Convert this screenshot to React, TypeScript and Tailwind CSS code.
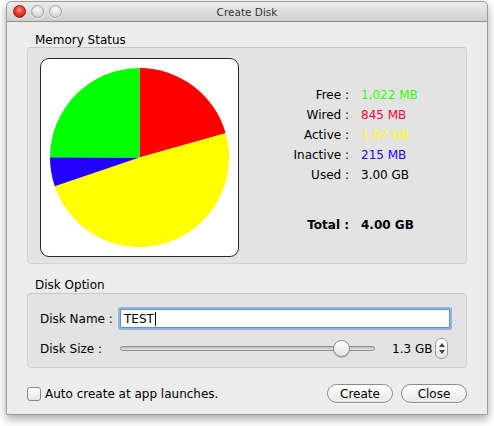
import React from "react";

const slices = [
  { mb: 845, color: "#ff0000" },
  { mb: 2014, color: "#ffff00" },
  { mb: 215, color: "#2200ff" },
  { mb: 1022, color: "#00ff00" },
];

function Pie() {
  const cx = 98.5;
  const cy = 98.5;
  const r = 89.5;
  const total = slices.reduce((s, x) => s + x.mb, 0);
  let a = 0;
  const pt = (deg: number) => {
    const rad = (deg * Math.PI) / 180;
    return [cx + r * Math.sin(rad), cy - r * Math.cos(rad)];
  };
  return (
    <svg width="197" height="197" viewBox="0 0 197 197">
      {slices.map((s, i) => {
        const start = a;
        const sweep = (s.mb / total) * 360;
        a += sweep;
        const [x1, y1] = pt(start);
        const [x2, y2] = pt(start + sweep);
        const large = sweep > 180 ? 1 : 0;
        return (
          <path
            key={i}
            d={`M${cx} ${cy} L${x1} ${y1} A${r} ${r} 0 ${large} 1 ${x2} ${y2} Z`}
            fill={s.color}
          />
        );
      })}
    </svg>
  );
}

function Light({ red }: { red?: boolean }) {
  return red ? (
    <div className="w-[13px] h-[13px] rounded-full border border-[#9b1a14] bg-[radial-gradient(circle_at_50%_35%,#ff9c8f_0%,#f0392b_45%,#b3130a_100%)] shadow-[0_1px_0_rgba(255,255,255,0.6)]" />
  ) : (
    <div className="w-[13px] h-[13px] rounded-full border border-[#a5a5a5] bg-[radial-gradient(circle_at_50%_35%,#fbfbfb_0%,#dedede_55%,#c4c4c4_100%)] shadow-[0_1px_0_rgba(255,255,255,0.6)]" />
  );
}

const rows = [
  { label: "Free :", value: "1,022 MB", color: "text-[#33ff00]" },
  { label: "Wired :", value: "845 MB", color: "text-[#ff0033]" },
  { label: "Active :", value: "1.97 GB", color: "text-[#ffff00]" },
  { label: "Inactive :", value: "215 MB", color: "text-[#2200ff]" },
  { label: "Used :", value: "3.00 GB", color: "text-black" },
];

export default function App() {
  return (
    <div
      className="w-[494px] h-[426px] bg-white pt-[1px] pl-[6px] text-black"
      style={{ fontFamily: '"DejaVu Sans", sans-serif' }}
    >
      <div className="w-[482px] h-[414px] bg-[#ececec] rounded-t-[5px] border border-[#9c9c9c] shadow-[0_4px_10px_rgba(0,0,0,0.35)] flex flex-col overflow-hidden">
        {/* Title bar */}
        <div className="h-[20px] shrink-0 grid grid-cols-[1fr_auto_1fr] items-center bg-gradient-to-b from-[#ececec] to-[#d0d0d0] border-b border-[#8e8e8e] rounded-t-[5px]">
          <div className="flex items-center gap-[5px] pl-[6px]">
            <Light red />
            <Light />
            <Light />
          </div>
          <div className="text-[10.5px] leading-[14px] text-[#333333]">Create Disk</div>
          <div />
        </div>

        {/* Content */}
        <div className="flex flex-col px-[20px]">
          <div className="mt-[11px] pl-[8px] text-[12px] leading-[14px]">Memory Status</div>
          <div className="h-[217px] rounded-[4px] border border-[#d2d2d2] border-t-[#c8c8c8] bg-[#e3e3e3] flex">
            <div className="ml-[12px] mt-[10px] w-[199px] h-[199px] shrink-0 rounded-[9px] border border-[#262626] bg-white overflow-hidden">
              <Pie />
            </div>
            <div className="mt-[37px] w-[232px] flex flex-col text-[12px]">
              {rows.map((r) => (
                <div key={r.label} className="h-[20px] grid grid-cols-[110px_auto] items-center gap-x-[12px]">
                  <span className="text-right">{r.label}</span>
                  <span className={r.color}>{r.value}</span>
                </div>
              ))}
              <div className="mt-[30px] h-[20px] grid grid-cols-[110px_auto] items-center gap-x-[12px] font-bold">
                <span className="text-right">Total :</span>
                <span>4.00 GB</span>
              </div>
            </div>
          </div>

          <div className="mt-[14px] pl-[8px] text-[12px] leading-[14px]">Disk Option</div>
          <div className="mt-[1px] h-[75px] rounded-[4px] border border-[#d2d2d2] border-t-[#c8c8c8] bg-[#e3e3e3] flex flex-col pl-[12px] text-[12px]">
            <div className="mt-[14px] h-[21px] flex items-center">
              <div className="w-[80px]">Disk Name :</div>
              <div className="w-[330px] h-[19px] flex items-center bg-white border border-[#5f8fcf] shadow-[0_0_0_2px_rgba(120,165,225,0.75)] rounded-[1px] pl-[3px]">
                <span className="leading-[16px]">TEST</span>
                <span className="w-[1px] h-[14px] bg-black ml-[1px]" />
              </div>
            </div>
            <div className="mt-[9px] h-[21px] flex items-center">
              <div className="w-[80px]">Disk Size :</div>
              <div className="relative w-[255px] h-[17px] flex items-center">
                <div className="w-full h-[5px] rounded-full border border-[#8e8e8e] bg-gradient-to-b from-[#b9b9b9] to-[#e8e8e8]" />
                <div className="absolute left-[213px] top-0 w-[17px] h-[17px] rounded-full border border-[#8a8a8a] bg-gradient-to-b from-white to-[#e2e2e2] shadow-[0_1px_1px_rgba(0,0,0,0.2)]" />
              </div>
              <div className="ml-[17px] leading-[16px]">1.3 GB</div>
              <div className="ml-[3px] w-[13px] h-[21px] rounded-[6px] border border-[#9a9a9a] bg-gradient-to-b from-white to-[#e6e6e6] flex flex-col items-center justify-center gap-[3px]">
                <svg width="6" height="4" viewBox="0 0 6 4">
                  <path d="M0 4 L3 0 L6 4 Z" fill="#444" />
                </svg>
                <svg width="6" height="4" viewBox="0 0 6 4">
                  <path d="M0 0 L3 4 L6 0 Z" fill="#444" />
                </svg>
              </div>
            </div>
          </div>

          <div className="mt-[16px] h-[19px] flex items-center text-[12px]">
            <div className="w-[14px] h-[14px] rounded-[3px] border border-[#8a8a8a] bg-gradient-to-b from-white to-[#e4e4e4]" />
            <span className="ml-[4px]">Auto create at app launches.</span>
            <div className="ml-auto flex gap-[8px]">
              <div className="w-[66px] h-[19px] rounded-full border border-[#8c8c8c] bg-gradient-to-b from-white to-[#e9e9e9] flex items-center justify-center shadow-[0_1px_0_rgba(255,255,255,0.7)]">
                Create
              </div>
              <div className="w-[66px] h-[19px] rounded-full border border-[#8c8c8c] bg-gradient-to-b from-white to-[#e9e9e9] flex items-center justify-center shadow-[0_1px_0_rgba(255,255,255,0.7)]">
                Close
              </div>
            </div>
          </div>
        </div>
      </div>
    </div>
  );
}
